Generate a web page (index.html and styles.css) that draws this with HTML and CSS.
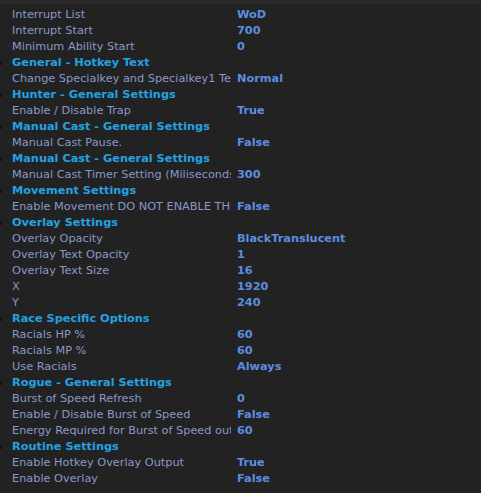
FILE: index.html
```html
<!DOCTYPE html>
<html>
<head>
<meta charset="utf-8">
<title>Settings</title>
<link rel="stylesheet" href="styles.css">
</head>
<body>
<div class="topbar"></div>
<div class="grid">
  <div class="row"><div class="name">Interrupt List</div><div class="value">WoD</div></div>
  <div class="row"><div class="name">Interrupt Start</div><div class="value">700</div></div>
  <div class="row"><div class="name">Minimum Ability Start</div><div class="value">0</div></div>
  <div class="cat">General - Hotkey Text</div>
  <div class="row"><div class="name">Change Specialkey and Specialkey1 Text</div><div class="value">Normal</div></div>
  <div class="cat">Hunter - General Settings</div>
  <div class="row"><div class="name">Enable / Disable Trap</div><div class="value">True</div></div>
  <div class="cat">Manual Cast - General Settings</div>
  <div class="row"><div class="name">Manual Cast Pause.</div><div class="value">False</div></div>
  <div class="cat">Manual Cast - General Settings</div>
  <div class="row"><div class="name">Manual Cast Timer Setting (Miliseconds)</div><div class="value">300</div></div>
  <div class="cat">Movement Settings</div>
  <div class="row"><div class="name">Enable Movement DO NOT ENABLE THIS</div><div class="value">False</div></div>
  <div class="cat">Overlay Settings</div>
  <div class="row"><div class="name">Overlay Opacity</div><div class="value">BlackTranslucent</div></div>
  <div class="row"><div class="name">Overlay Text Opacity</div><div class="value">1</div></div>
  <div class="row"><div class="name">Overlay Text Size</div><div class="value">16</div></div>
  <div class="row"><div class="name">X</div><div class="value">1920</div></div>
  <div class="row"><div class="name">Y</div><div class="value">240</div></div>
  <div class="cat">Race Specific Options</div>
  <div class="row"><div class="name">Racials HP %</div><div class="value">60</div></div>
  <div class="row"><div class="name">Racials MP %</div><div class="value">60</div></div>
  <div class="row"><div class="name">Use Racials</div><div class="value">Always</div></div>
  <div class="cat">Rogue - General Settings</div>
  <div class="row"><div class="name">Burst of Speed Refresh</div><div class="value">0</div></div>
  <div class="row"><div class="name">Enable / Disable Burst of Speed</div><div class="value">False</div></div>
  <div class="row"><div class="name">Energy Required for Burst of Speed out</div><div class="value">60</div></div>
  <div class="cat">Routine Settings</div>
  <div class="row"><div class="name">Enable Hotkey Overlay Output</div><div class="value">True</div></div>
  <div class="row"><div class="name">Enable Overlay</div><div class="value">False</div></div>
</div>
</body>
</html>
```
FILE: styles.css
```css
body {
  margin: 0;
  background: #222222;
  font-family: "DejaVu Sans", Verdana, sans-serif;
  font-size: 11.3px;
  height: 493px;
  overflow: hidden;
}

.topbar {
  height: 4px;
  background: #2a2a2a;
}

.grid {
  padding-top: 3px;
}

.row {
  display: grid;
  grid-template-columns: 231px 1fr;
  height: 16px;
  line-height: 16px;
}

.name {
  padding-left: 12px;
  color: #8a98c8;
  white-space: nowrap;
  overflow: hidden;
}

.value {
  padding-left: 6px;
  color: #5b8ee0;
  font-weight: bold;
  white-space: nowrap;
}

.cat {
  position: relative;
  height: 16px;
  line-height: 16px;
  padding-left: 12px;
  color: #22a2e0;
  font-weight: bold;
  white-space: nowrap;
}

.cat::before {
  content: "";
  position: absolute;
  left: 0;
  top: 6px;
  width: 2px;
  height: 4px;
  background: #111111;
}
```
